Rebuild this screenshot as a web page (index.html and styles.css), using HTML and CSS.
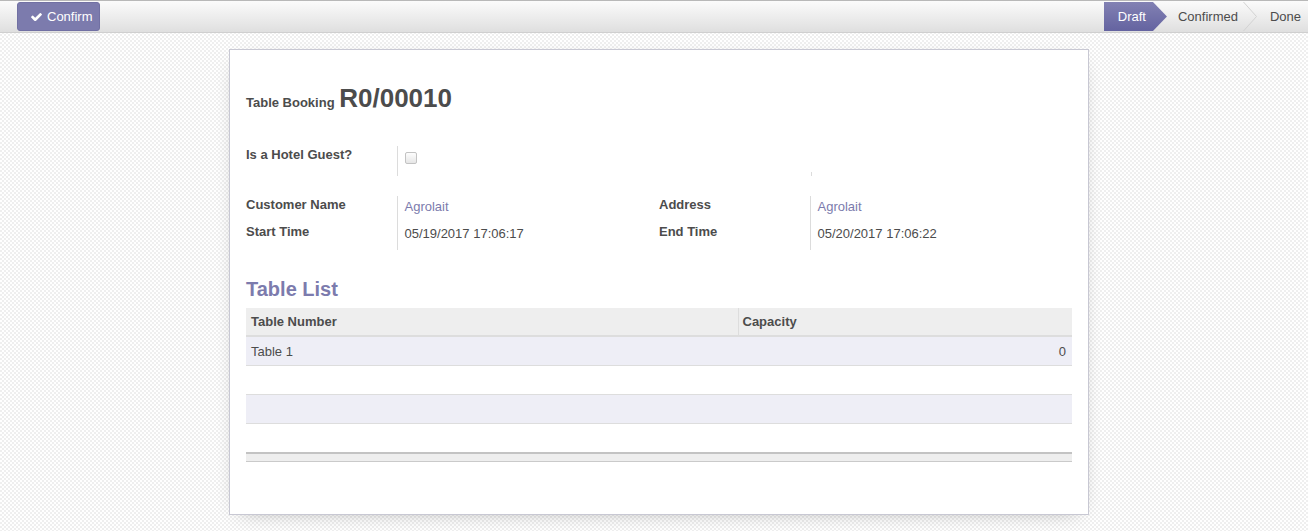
FILE: index.html
```html
<!DOCTYPE html>
<html>
<head>
<meta charset="utf-8">
<link rel="stylesheet" href="styles.css">
</head>
<body>
<div class="control-panel">
  <button class="btn-confirm">
    <svg class="check" viewBox="120 380 1560 1060" width="11" height="8"><path fill="#fff" d="M1671 566q0 40-28 68l-724 724-136 136q-28 28-68 28t-68-28l-136-136-362-362q-28-28-28-68t28-68l136-136q28-28 68-28t68 28l294 295 656-657q28-28 68-28t68 28l136 136q28 28 28 68z"/></svg>
    <span>Confirm</span>
  </button>
  <div class="statusbar">
    <div class="status status-active">Draft</div>
    <div class="status">Confirmed</div>
    <svg class="chevron" viewBox="0 0 14 29" width="14" height="29"><polyline points="0.5,0 13.5,14.5 0.5,29" fill="none" stroke="#d2d2d2" stroke-width="1"/></svg>
    <div class="status status-last">Done</div>
  </div>
</div>
<div class="content">
  <div class="sheet">
    <div class="title">
      <span class="title-label">Table Booking</span>
      <span class="title-name">R0/00010</span>
    </div>
    <div class="groups groups-first">
      <table class="group">
        <tr>
          <td class="lbl">Is a Hotel Guest?</td>
          <td class="val val-check"><span class="checkbox"></span></td>
        </tr>
      </table>
      <table class="group">
        <tr>
          <td class="lbl lbl-empty"></td>
          <td class="val"></td>
        </tr>
      </table>
    </div>
    <div class="groups">
      <table class="group">
        <tr>
          <td class="lbl">Customer Name</td>
          <td class="val"><span class="link">Agrolait</span></td>
        </tr>
        <tr>
          <td class="lbl">Start Time</td>
          <td class="val">05/19/2017 17:06:17</td>
        </tr>
      </table>
      <table class="group">
        <tr>
          <td class="lbl">Address</td>
          <td class="val"><span class="link">Agrolait</span></td>
        </tr>
        <tr>
          <td class="lbl">End Time</td>
          <td class="val">05/20/2017 17:06:22</td>
        </tr>
      </table>
    </div>
    <h2 class="section">Table List</h2>
    <table class="list">
      <thead>
        <tr><th class="col-num">Table Number</th><th class="col-cap">Capacity</th></tr>
      </thead>
      <tbody>
        <tr class="odd"><td>Table 1</td><td class="num">0</td></tr>
        <tr><td>&nbsp;</td><td></td></tr>
        <tr class="odd"><td>&nbsp;</td><td></td></tr>
        <tr class="last"><td>&nbsp;</td><td></td></tr>
      </tbody>
      <tfoot>
        <tr><td></td><td></td></tr>
      </tfoot>
    </table>
  </div>
</div>
</body>
</html>
```
FILE: styles.css
```css
* { box-sizing: border-box; }
html, body {
  margin: 0;
  padding: 0;
  height: 100%;
}
body {
  font-family: "Liberation Sans", Arial, Helvetica, sans-serif;
  font-size: 13px;
  line-height: 18px;
  color: #4c4c4c;
  background: repeating-conic-gradient(#efefef 0 25%, #ffffff 0 50%) 0 0 / 4px 4px;
}

.control-panel {
  display: flex;
  justify-content: space-between;
  align-items: stretch;
  height: 33px;
  padding: 1px 0 1px 17px;
  border-top: 1px solid #b8b8b8;
  border-bottom: 1px solid #cfcfcf;
  background: linear-gradient(#fbfbfb, #dfdfdf);
}

.btn-confirm {
  display: flex;
  align-items: center;
  gap: 5px;
  height: 29px;
  width: 83px;
  padding: 0 0 0 13px;
  border: 1px solid #7170a3;
  border-radius: 3px;
  background: #7c7bad;
  color: #fff;
  font-family: inherit;
  font-size: 13px;
}
.btn-confirm .check { display: block; margin-top: 1px; }

.statusbar {
  display: flex;
  align-items: stretch;
  height: 29px;
}
.status {
  display: flex;
  align-items: center;
  height: 29px;
  color: #4c4c4c;
}
.status-active {
  padding: 0 21px 0 14px;
  color: #fff;
  background: linear-gradient(#8281b3, #6463a0);
  clip-path: polygon(0 0, calc(100% - 14px) 0, 100% 50%, calc(100% - 14px) 100%, 0 100%);
}
.status-active + .status { padding: 0 5px 0 11px; }
.chevron { display: block; }
.status-last { padding: 0 7px 0 13px; }

.content {
  display: flex;
  justify-content: center;
  padding: 16px 0 16px 10px;
}
.sheet {
  width: 860px;
  min-height: 466px;
  padding: 30px 16px 52px 16px;
  background: #fff;
  border: 1px solid #c8c8d3;
  box-shadow: 0 5px 20px -12px rgba(0,0,0,0.45);
}

.title {
  height: 36px;
  line-height: 36px;
  white-space: nowrap;
}
.title-label {
  font-weight: bold;
  font-size: 13px;
}
.title-name {
  font-weight: bold;
  font-size: 26px;
  margin-left: 1px;
}

.groups {
  display: flex;
  margin-top: 20px;
}
.groups-first { margin-top: 30px; }
.group {
  width: 413px;
  border-collapse: collapse;
}
.lbl {
  width: 151px;
  padding: 0;
  vertical-align: top;
  font-weight: bold;
  border-right: 1px solid #dcdcdc;
  line-height: 18px;
  white-space: nowrap;
}
.val {
  padding: 2px 0 7px 7px;
  vertical-align: top;
  line-height: 18px;
}
.val-check { padding: 6px 0 12px 7px; height: 30px; }
.lbl-empty {
  width: 153px;
  border-right: none;
  height: 30px;
  position: relative;
}
.lbl-empty::after {
  content: "";
  position: absolute;
  right: 0;
  bottom: 0;
  width: 1px;
  height: 4px;
  background: #dcdcdc;
}
.checkbox {
  display: block;
  width: 12px;
  height: 12px;
  border: 1px solid #c3c3c3;
  border-radius: 2px;
  background: linear-gradient(#fdfdfd, #e6e6e6);
}
.link { color: #7c7bad; }

.section {
  margin: 27px 0 7px 0;
  font-size: 20px;
  line-height: 24px;
  font-weight: bold;
  color: #7c7bad;
}

.list {
  width: 100%;
  border-collapse: collapse;
}
.list th {
  text-align: left;
  font-weight: bold;
  background: #eeeeee;
  padding: 5px 5px 4px 5px;
  border-bottom: 2px solid #dddddd;
  line-height: 18px;
}
.list .col-num { width: 492px; }
.list .col-cap { border-left: 1px solid #dddddd; padding-left: 4px; }
.list td {
  padding: 6px 6px 4px 5px;
  line-height: 18px;
  border-bottom: 1px solid #dddddd;
}
.list tr.odd td { background: #eeeef6; }
.list tr.last td { border-bottom: none; }
.list .num { text-align: right; }
.list tfoot td {
  padding: 0;
  height: 8px;
  background: #eeeeee;
  border-top: 2px solid #c3c3c3;
  border-bottom: 1px solid #cacaca;
}
```
